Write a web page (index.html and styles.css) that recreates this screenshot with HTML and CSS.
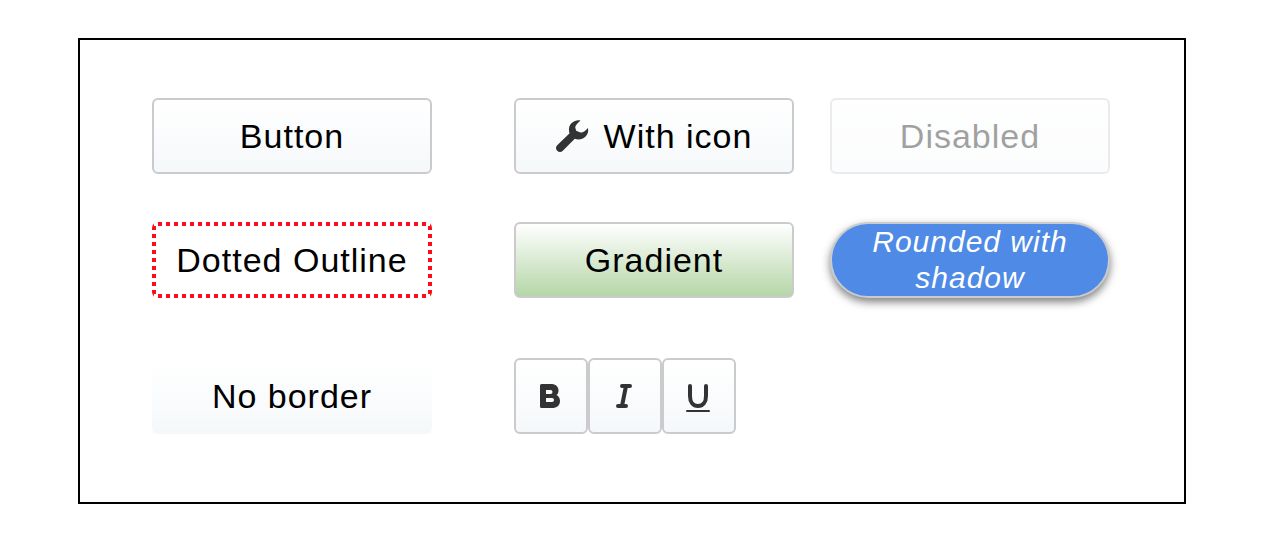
FILE: index.html
```html
<!DOCTYPE html>
<html lang="en">
<head>
  <meta charset="UTF-8" />
  <meta name="viewport" content="width=device-width, initial-scale=1" />
  <title>Buttons</title>
  <link rel="stylesheet" href="styles.css">
</head>
<body>

  <main class="panel">
    <button type="button" class="btn">Button</button>
    <button type="button" class="btn">
      <svg class="wrench" viewBox="0 0 32 32" aria-hidden="true">
        <path d="M24.5 0.5 C19 -0.8 13.5 3.2 13 8.5 C12.8 10.3 13.1 11.8 13.6 13.2 L1.2 25.2 C-0.4 26.8 -0.4 29.3 1.2 30.8 C2.7 32.4 5.2 32.4 6.8 30.8 L18.8 18.8 C22.5 20.2 26.8 19.4 29.6 16.6 C31.7 14.5 32.7 11.2 32 8 C29.5 10.3 27.2 12.9 24.4 12.6 L20.2 10.8 L19.2 7.5 C19.3 5.2 22 2.8 24.5 0.5 Z" />
      </svg>
      With icon
    </button>
    <button type="button" class="btn" disabled>Disabled</button>

    <button type="button" class="btn dotted">Dotted Outline</button>
    <button type="button" class="btn gradient">Gradient</button>
    <button type="button" class="btn rounded">Rounded with shadow</button>

    <button type="button" class="btn borderless last-row">No border</button>
    <div class="toolbar last-row">
      <button type="button" class="btn tool" aria-label="Bold">
        <svg viewBox="0 0 32 32" aria-hidden="true">
          <path fill-rule="evenodd" d="M6.5 4 H16 C20.5 4 23.5 6.5 23.5 10.5 C23.5 12.5 22.8 14 21.5 15 C23.8 16.3 25 18.4 25 21 C25 25.4 21.8 28 17 28 H6.5 Q5 28 5 26.5 V5.5 Q5 4 6.5 4 Z M11 10 V14 H15.5 Q17.5 14 17.5 12 Q17.5 10 15.5 10 Z M11 18 V22 H17 Q19 22 19 20 Q19 18 17 18 Z" />
        </svg>
      </button>
      <button type="button" class="btn tool" aria-label="Italic">
        <svg class="stroked" viewBox="0 0 32 32" aria-hidden="true">
          <path d="M13 6 H21 M9 26 H17 M17 6 L13 26" />
        </svg>
      </button>
      <button type="button" class="btn tool" aria-label="Underline">
        <svg class="stroked" viewBox="0 0 32 32" aria-hidden="true">
          <path d="M7 6 V16 C7 22 10 26 15 26 C20 26 23 22 23 16 V6" />
          <path class="rule" d="M4 31 H26" />
        </svg>
      </button>
    </div>
  </main>

</body>
</html>
```

FILE: styles.css
```css
body {
  margin: 38px 78px;
  background-color: #fff;
  font-family: "Liberation Sans", Arial, sans-serif;
}

.panel {
  display: grid;
  grid-template-columns: 326px 280px 280px;
  gap: 48px 36px;
  padding: 58px 72px 68px;
  border: 2px solid #000;
}

.btn {
  display: flex;
  align-items: center;
  justify-content: center;
  gap: 16px;
  box-sizing: border-box;
  width: 280px;
  height: 76px;
  padding: 0;
  border: 2px solid #cbcbcd;
  border-radius: 6px;
  background: linear-gradient(#fff, #f5f8fa);
  color: #000;
  font-family: inherit;
  font-size: 34px;
  letter-spacing: 1px;
}

.btn:disabled {
  opacity: 0.37;
}

.btn svg {
  width: 32px;
  height: 32px;
  fill: #333;
  overflow: visible;
}

/* square dots, one every 8px along each side */
.dotted {
  --dots-x: repeating-linear-gradient(90deg, #fd0d1b 0 4px, transparent 4px 8px);
  --dots-y: repeating-linear-gradient(#fd0d1b 0 4px, transparent 4px 8px);
  border: 4px solid transparent;
  background:
    var(--dots-x) 6px 0 / 8px 4px repeat-x,
    var(--dots-x) 6px 100% / 8px 4px repeat-x,
    var(--dots-y) 0 4px / 4px 8px repeat-y,
    var(--dots-y) 100% 4px / 4px 8px repeat-y;
  background-origin: border-box;
}

.gradient {
  background: linear-gradient(#fff, #b5d6a7);
}

.rounded {
  padding: 0 24px;
  border-radius: 38px;
  background: #4e8ae6;
  color: #fff;
  font-size: 30px;
  font-style: italic;
  line-height: 36px;
  box-shadow: 0 4px 8px rgba(0, 0, 0, 0.5);
}

.borderless {
  border: none;
}

.last-row {
  margin-top: 12px;
}

.toolbar {
  display: flex;
}

.tool {
  width: 74px;
}

.btn .stroked {
  fill: none;
  stroke: #333;
  stroke-width: 4px;
  stroke-linecap: round;
}

.btn .rule {
  stroke-width: 2px;
}
```
